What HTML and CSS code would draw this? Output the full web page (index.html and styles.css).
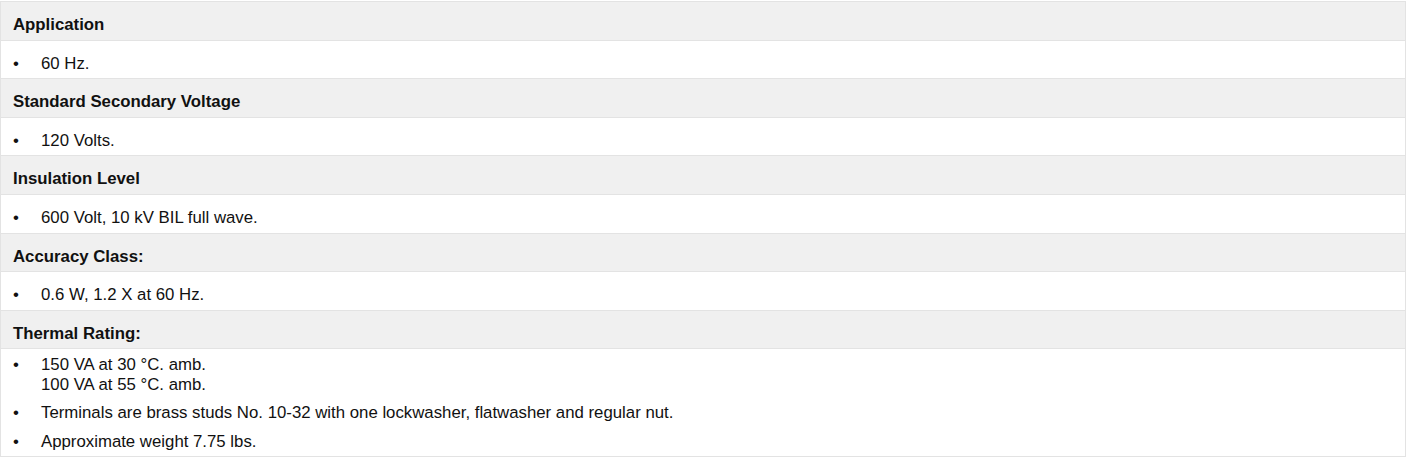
FILE: index.html
```html
<!DOCTYPE html>
<html>
<head>
<meta charset="utf-8">
<link rel="stylesheet" href="styles.css">
</head>
<body>
<div class="spec">
  <div class="hd">Application</div>
  <ul class="bd">
    <li><span class="dot">•</span><span>60 Hz.</span></li>
  </ul>
  <div class="hd">Standard Secondary Voltage</div>
  <ul class="bd">
    <li><span class="dot">•</span><span>120 Volts.</span></li>
  </ul>
  <div class="hd">Insulation Level</div>
  <ul class="bd">
    <li><span class="dot">•</span><span>600 Volt, 10 kV BIL full wave.</span></li>
  </ul>
  <div class="hd">Accuracy Class:</div>
  <ul class="bd">
    <li><span class="dot">•</span><span>0.6 W, 1.2 X at 60 Hz.</span></li>
  </ul>
  <div class="hd">Thermal Rating:</div>
  <ul class="bd multi">
    <li><span class="dot">•</span><span>150 VA at 30 °C. amb.<br>100 VA at 55 °C. amb.</span></li>
    <li><span class="dot">•</span><span>Terminals are brass studs No. 10-32 with one lockwasher, flatwasher and regular nut.</span></li>
    <li><span class="dot">•</span><span>Approximate weight 7.75 lbs.</span></li>
  </ul>
</div>
</body>
</html>
```

FILE: styles.css
```css
html, body {
  margin: 0;
  padding: 0;
  background: #ffffff;
}
body {
  font-family: "Liberation Sans", Arial, sans-serif;
  font-size: 16.8px;
  line-height: 19.5px;
  color: #111111;
  padding-top: 1px;
}
.spec {
  width: 1406px;
  box-sizing: border-box;
  border: 1px solid #e3e3e3;
  border-bottom: none;
}
.hd {
  background: #f0f0f0;
  font-weight: bold;
  padding: 13px 12px 5.1px 12px;
  border-bottom: 1px solid #e3e3e3;
}
.bd {
  list-style: none;
  margin: 0;
  padding: 13px 12px 5.1px 12px;
  border-bottom: 1px solid #e3e3e3;
}
.bd li {
  display: flex;
}
.bd.multi {
  padding-top: 6px;
  padding-bottom: 5px;
}
.bd.multi li + li {
  margin-top: 9px;
}
.dot {
  width: 28px;
  flex: none;
}
```
